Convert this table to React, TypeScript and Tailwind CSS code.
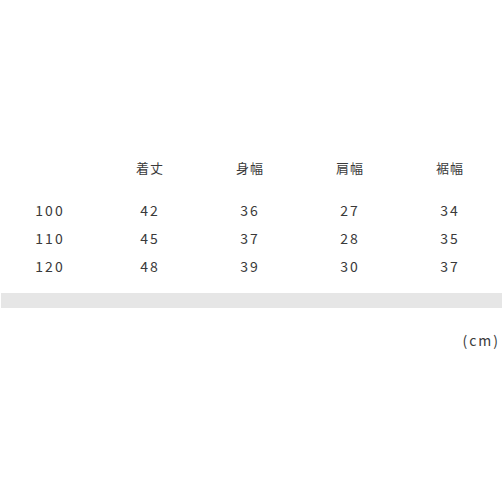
const heads = ['', '着丈', '身幅', '肩幅', '裾幅'];
const rows = [
  ['100', '42', '36', '27', '34'],
  ['110', '45', '37', '28', '35'],
  ['120', '48', '39', '30', '37'],
];

export default function App() {
  return (
    <div className="w-[502px] h-[502px] bg-white text-[#3a3a3a] text-[13px] pt-[158px]" style={{ fontFamily: '"Noto Sans CJK JP", "Noto Sans", sans-serif' }}>
      <div className="grid grid-cols-5 w-[500px] h-[20px] items-center leading-[20px] tracking-[1px]">
        {heads.map((h, i) => (
          <div key={i} className="text-center">{h}</div>
        ))}
      </div>
      <div className="mt-[18px] flex flex-col">
        {rows.map((r) => (
          <div key={r[0]} className="grid grid-cols-5 w-[500px] h-[28px] items-center leading-[20px] text-[14px] tracking-[2px]">
            {r.map((c, i) => (
              <div key={i} className="text-center">{c}</div>
            ))}
          </div>
        ))}
      </div>
      <div className="mt-[13px] ml-[1px] h-[15px] bg-[#e6e6e6]" />
      <div className="mt-[22px] pr-[2px] text-right text-[14px] tracking-[2px] leading-[20px]">(cm)</div>
    </div>
  );
}
